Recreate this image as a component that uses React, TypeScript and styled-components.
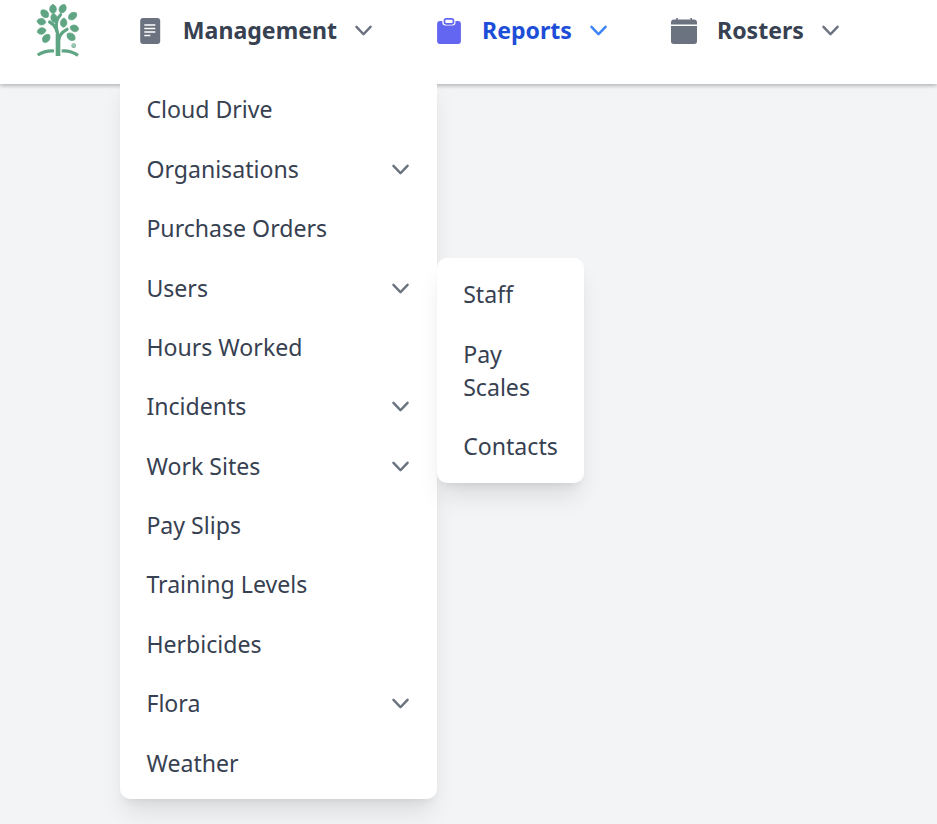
import React from "react";
import styled, { createGlobalStyle } from "styled-components";

const GlobalStyle = createGlobalStyle`
  * { box-sizing: border-box; }
  body {
    margin: 0;
    background: #f3f4f6;
    color: #374151;
    font-family: "Noto Sans", sans-serif;
    font-size: 23.1px;
    line-height: 33px;
    overflow: hidden;
  }
`;

const Page = styled.div`
  height: 824px;
`;

const Header = styled.header`
  height: 84px;
  display: flex;
  align-items: flex-start;
  padding-left: 20px;
  background: #fff;
  box-shadow: 0 1.65px 4.95px rgba(0, 0, 0, 0.16), 0 1.65px 3.3px rgba(0, 0, 0, 0.12);
`;

const Logo = styled.svg`
  width: 80px;
  height: 70px;
  flex: none;
`;

const Nav = styled.nav`
  display: flex;
  padding: 14px 0 0 39px;
`;

const NavItem = styled.div<{ $width: number; $active?: boolean }>`
  position: relative;
  width: ${(p) => p.$width}px;
  height: 33px;
  display: flex;
  align-items: center;
  flex: none;
  font-weight: 700;
  color: ${(p) => (p.$active ? "#1d4ed8" : "#374151")};
`;

const NavIcon = styled.svg<{ $gap: number; $color: string }>`
  width: 28px;
  height: 28px;
  margin: 1px ${(p) => p.$gap}px 0 0;
  flex: none;
  color: ${(p) => p.$color};
`;

const NavLabel = styled.span<{ $width: number }>`
  width: ${(p) => p.$width}px;
  white-space: nowrap;
`;

const ChevronIcon = styled.svg<{ $color?: string }>`
  width: 33px;
  height: 33px;
  flex: none;
  color: ${(p) => p.$color ?? "#6b7280"};
`;

const Menu = styled.ul<{ $width: number; $left: number; $top: number }>`
  position: absolute;
  left: ${(p) => p.$left}px;
  top: ${(p) => p.$top}px;
  width: ${(p) => p.$width}px;
  margin: 0;
  padding: 6.6px 0;
  list-style: none;
  background: #fff;
  border-radius: 9.9px;
  font-weight: 400;
  color: #374151;
  box-shadow: 0 16.5px 24.75px -5px rgba(0, 0, 0, 0.1), 0 6.6px 9.9px -6.6px rgba(0, 0, 0, 0.1);
`;

const MenuItem = styled.li`
  position: relative;
  display: flex;
  justify-content: space-between;
  align-items: center;
  padding: 13.2px 20px 13.2px 26.4px;
`;

const Chevron = ({ color }: { color?: string }) => (
  <ChevronIcon $color={color} viewBox="0 0 20 20" fill="currentColor">
    <path d="M5.23 7.21a.75.75 0 0 1 1.06.02L10 11.168l3.71-3.938a.75.75 0 1 1 1.08 1.04l-4.25 4.5a.75.75 0 0 1-1.08 0l-4.25-4.5a.75.75 0 0 1 .02-1.06z" />
  </ChevronIcon>
);

// Each leaf: centre x, centre y, half width, half length, rotation.
const leaves: [number, number, number, number, number][] = [
  [99, 27, 10.5, 14, 0],
  [128, 26, 10.5, 14, 28],
  [74, 41, 10.5, 14.5, -45],
  [158, 48, 10.5, 14.5, 52],
  [64, 65, 10, 13.5, -78],
  [163, 85, 10, 13.5, -70],
  [65, 93, 10, 13.5, 76],
  [79, 115, 10.5, 14.5, 40],
  [153, 110, 10.5, 14.5, -52],
  [102, 54, 9.5, 14, -12],
  [131, 68, 10, 14, 5],
];

const TreeLogo = () => (
  <Logo viewBox="0 0 240 210">
    <g fill="#5fa583">
      {leaves.map(([x, y, rx, ry, angle]) => (
        <path
          key={`${x}-${y}`}
          transform={`translate(${x} ${y}) rotate(${angle})`}
          d={`M0 ${-ry} C${rx * 1.3} ${-ry * 0.6} ${rx * 1.3} ${ry * 0.7} 0 ${ry} C${-rx * 1.3} ${ry * 0.7} ${-rx * 1.3} ${-ry * 0.6} 0 ${-ry}Z`}
          stroke="#5fa583"
          strokeWidth="2"
          strokeLinejoin="round"
        />
      ))}
      <circle cx="161" cy="137" r="7" opacity="0.85" />
    </g>
    <path d="M158 140v-6h5v3h-4m3 0 3 3" fill="none" stroke="#d9ebe2" strokeWidth="1.5" />
    <g fill="none" stroke="#5fa583" strokeLinecap="round">
      <path d="M114 168V103" strokeWidth="14" strokeLinecap="butt" />
      <path d="M114 112Q112 78 89 66" strokeWidth="10" />
      <path d="M111 92Q104 62 122 44" strokeWidth="9" />
      <path d="M116 119Q118 101 141 88" strokeWidth="10" />
      <path d="M53 165Q76 151 102 153" strokeWidth="9.5" strokeLinecap="butt" />
      <path d="M125 153Q152 151 174 166" strokeWidth="9.5" strokeLinecap="butt" />
    </g>
  </Logo>
);

const DocumentIcon = () => (
  <NavIcon viewBox="0 0 28 28" $gap={15.8} $color="#6b7280">
    <rect x="1.2" y="1" width="20" height="26" rx="3" fill="currentColor" />
    <path d="M5.3 8h11M5.3 11.5h11M5.3 15h11M5.3 18.5h6" stroke="#fff" strokeWidth="1.6" />
  </NavIcon>
);

const ClipboardIcon = () => (
  <NavIcon viewBox="0 0 28 28" $gap={17} $color="#6366f1">
    <path
      d="M3 4H5.3V6Q5.3 8.4 7.8 8.4H16Q18.5 8.4 18.5 6V4H21Q23.9 4 23.9 7V24Q23.9 27 21 27H3Q.1 27 .1 24V7Q.1 4 3 4Z"
      fill="currentColor"
    />
    <rect x="7.5" y="1.8" width="9" height="5" rx="1.8" fill="none" stroke="currentColor" strokeWidth="1.7" />
  </NavIcon>
);

const CalendarIcon = () => (
  <NavIcon viewBox="0 0 28 28" $gap={19} $color="#6b7280">
    <path
      d="M6.2 1H7.8V2.6H20.4V1H22V2.6H24Q27 2.6 27 5.7V7.4H1V5.7Q1 2.6 4 2.6H6.2Z M1 9.1H27V24.3Q27 27 24.3 27H3.7Q1 27 1 24.3Z"
      fill="currentColor"
    />
  </NavIcon>
);

const items = [
  { label: "Cloud Drive" },
  { label: "Organisations", nested: true },
  { label: "Purchase Orders" },
  { label: "Users", nested: true, children: ["Staff", "Pay Scales", "Contacts"] },
  { label: "Hours Worked" },
  { label: "Incidents", nested: true },
  { label: "Work Sites", nested: true },
  { label: "Pay Slips" },
  { label: "Training Levels" },
  { label: "Herbicides" },
  { label: "Flora", nested: true },
  { label: "Weather" },
];

export default function App() {
  return (
    <Page>
      <GlobalStyle />
      <Header>
        <TreeLogo />
        <Nav>
          <NavItem $width={298}>
            <DocumentIcon />
            <NavLabel $width={164.2}>Management</NavLabel>
            <Chevron />
            <Menu $left={-19} $top={59.65} $width={317}>
              {items.map((item) => (
                <MenuItem key={item.label}>
                  {item.label}
                  {item.nested && <Chevron />}
                  {item.children && (
                    <Menu $left={316.8} $top={0} $width={147}>
                      {item.children.map((child) => (
                        <MenuItem key={child}>{child}</MenuItem>
                      ))}
                    </Menu>
                  )}
                </MenuItem>
              ))}
            </Menu>
          </NavItem>
          <NavItem $width={233} $active>
            <ClipboardIcon />
            <NavLabel $width={100}>Reports</NavLabel>
            <Chevron color="#3b82f6" />
          </NavItem>
          <NavItem $width={200}>
            <CalendarIcon />
            <NavLabel $width={97}>Rosters</NavLabel>
            <Chevron />
          </NavItem>
        </Nav>
      </Header>
    </Page>
  );
}
